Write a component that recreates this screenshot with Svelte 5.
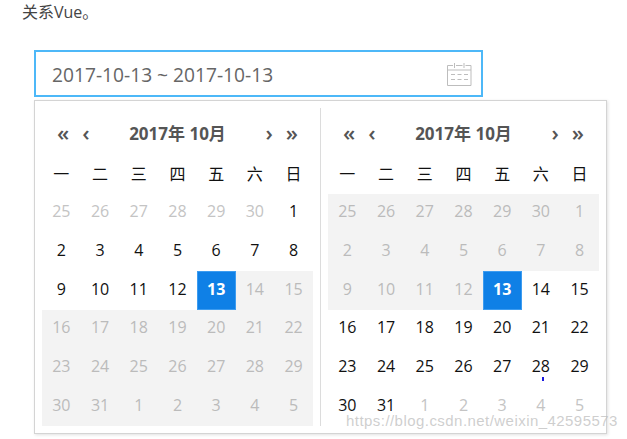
<script>
  const weekdays = ['一', '二', '三', '四', '五', '六', '日'];
  const seq = [25, 26, 27, 28, 29, 30];
  const days = [...seq.map((d) => [d, -1]), ...Array.from({ length: 31 }, (_, i) => [i + 1, 0]), ...[1, 2, 3, 4, 5].map((d) => [d, 1])];
  const selected = 18;

  function cellsFor(side) {
    return days.map(([n, offset], i) => {
      const other = offset !== 0;
      if (i === selected) return { n, cls: 'sel' };
      const disabled = side === 'left' ? i > selected : i < selected;
      return { n, cls: (disabled ? 'off' : '') + (other ? ' other' : '') };
    });
  }
  const panes = [
    { side: 'left', cells: cellsFor('left') },
    { side: 'right', cells: cellsFor('right') }
  ];
</script>

<div class="page">
  <p class="lead">关系Vue。</p>
  <div class="input">
    <span>2017-10-13 ~ 2017-10-13</span>
    <svg class="cal" width="26" height="24" viewBox="0 0 26 24" fill="none" stroke="#bdbdbd" stroke-width="1">
      <path d="M7 3.5H1.5V23.5H25V3.5H19.5M10 3.5H16.5" />
      <path d="M8.5 1V6M18 1V6" />
      <path d="M1.5 8H25" />
      <path d="M5 12.5H9M11.500 12.500H15.500M18 12.500H22M5 17.500H9M11.500 17.500H15.500M18 17.500H22" />
    </svg>
  </div>
  <div class="panel">
    {#each panes as pane}
      <section class="pane {pane.side}">
        <header>
          <span class="nav"><b>«</b><b>‹</b></span>
          <strong>2017年 10月</strong>
          <span class="nav end"><b>›</b><b>»</b></span>
        </header>
        <div class="grid">
          {#each weekdays as w}<div class="wd">{w}</div>{/each}
          {#each pane.cells as c}<div class="day {c.cls}">{c.n}</div>{/each}
        </div>
      </section>
    {/each}
    <i class="speck"></i>
    <span class="mark">https://blog.csdn.net/weixin_42595573</span>
  </div>
</div>

<style>
  :global(body) {
    margin: 0;
    background: #fff;
  }
  .page {
    width: 627px;
    height: 439px;
    overflow: hidden;
    font-family: "Noto Sans CJK SC", "Open Sans", sans-serif;
  }
  .lead {
    margin: 0;
    padding: 1px 0 0 22px;
    height: 50px;
    box-sizing: border-box;
    font-family: "Open Sans", "Noto Sans CJK SC", sans-serif;
    font-size: 16px;
    line-height: 22px;
    color: #444;
  }
  .input {
    box-sizing: border-box;
    margin-left: 34px;
    width: 449px;
    height: 47px;
    border: 2px solid #4db8f8;
    display: flex;
    align-items: center;
    justify-content: space-between;
    padding: 0 9px 0 16px;
    font-family: "Open Sans", sans-serif;
    font-size: 19.2px;
    color: #666;
  }
  .input span {
    padding-top: 1px;
  }
  .cal {
    display: block;
  }
  .panel {
    position: relative;
    box-sizing: border-box;
    margin: 3px 0 0 34px;
    width: 573px;
    height: 334px;
    border: 1px solid #d4d4d4;
    box-shadow: 1px 1px 3px rgba(0, 0, 0, 0.12);
    display: flex;
    padding: 7px;
    background: #fff;
  }
  .pane {
    width: 271px;
    flex: none;
  }
  .pane.right {
    margin-left: 15px;
    position: relative;
  }
  .pane.right::before {
    content: "";
    position: absolute;
    left: -8px;
    top: 0;
    bottom: 0;
    width: 1px;
    background: #dcdcdc;
  }
  header {
    height: 47px;
    padding: 1px 15px 0 15px;
    box-sizing: border-box;
    display: flex;
    align-items: center;
    justify-content: space-between;
    color: #555;
  }
  header strong {
    flex: 1;
    text-align: center;
    font-size: 17px;
    font-weight: 700;
    font-family: "Open Sans", "Noto Sans CJK SC", sans-serif;
    color: #555;
  }
  .nav {
    display: flex;
    gap: 13px;
    width: 40px;
    font-size: 22px;
    font-family: "Open Sans", sans-serif;
    line-height: 1;
  }
  .nav.end {
    justify-content: flex-end;
  }
  .nav b {
    font-weight: 600;
  }
  .grid {
    display: grid;
    grid-template-columns: repeat(7, 38.71px);
    grid-auto-rows: 38.67px;
  }
  .wd,
  .day {
    display: flex;
    align-items: center;
    justify-content: center;
    box-sizing: border-box;
    padding-bottom: 3px;
    font-size: 16px;
    color: #111;
  }
  .wd {
    font-family: "Noto Sans CJK SC", sans-serif;
  }
  .day {
    font-family: "Open Sans", sans-serif;
  }
  .other {
    color: #c4c4c4;
  }
  .off {
    background: #f3f3f3;
    color: #bbb;
  }
  .sel {
    background: #0f80e6;
    color: #fff;
    font-weight: 700;
    border: 1px solid #3d9cf0;
  }
  .speck {
    position: absolute;
    left: 507px;
    top: 276px;
    width: 2px;
    height: 4px;
    background: #1a1ae0;
  }
  .mark {
    position: absolute;
    left: 311px;
    top: 311px;
    font-family: "Liberation Sans", sans-serif;
    font-size: 15px;
    letter-spacing: 0.45px;
    color: rgba(190, 190, 190, 0.75);
    white-space: nowrap;
    pointer-events: none;
  }
</style>
